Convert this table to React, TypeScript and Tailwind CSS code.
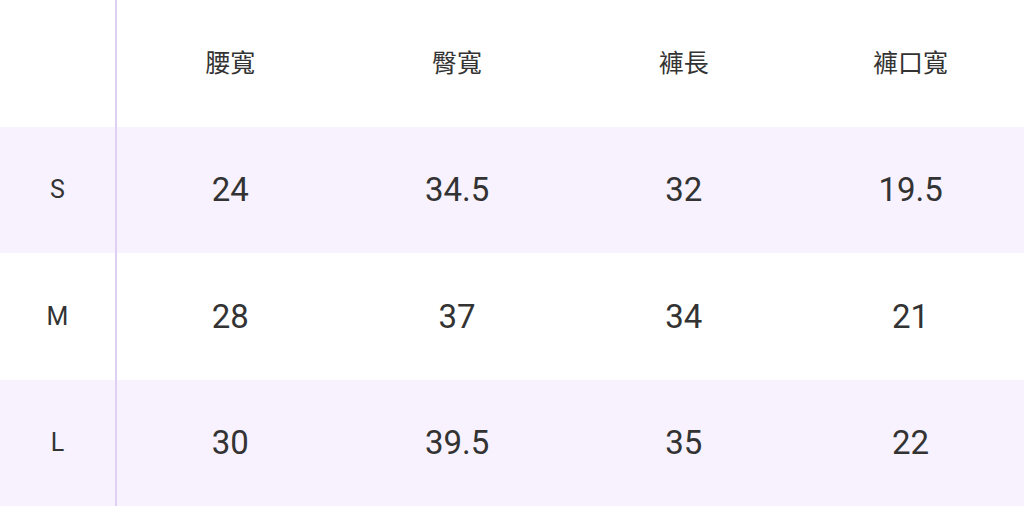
import React from "react";

type SizeRow = {
  size: string;
  values: string[];
};

const headers = ["腰寬", "臀寬", "褲長", "褲口寬"];

const rows: SizeRow[] = [
  { size: "S", values: ["24", "34.5", "32", "19.5"] },
  { size: "M", values: ["28", "37", "34", "21"] },
  { size: "L", values: ["30", "39.5", "35", "22"] },
];

const App = () => {
  return (
    <div
      className="w-[1024px] h-[506px] bg-white text-[#333333] flex flex-col"
      style={{ fontFamily: 'Roboto, "Noto Sans CJK TC", sans-serif' }}
    >
      <div className="flex h-[126.5px]">
        <div className="w-[117px] border-r-2 border-[#ddd0f3]" />
        {headers.map((title) => (
          <div key={title} className="flex-1 flex items-center justify-center text-[25px]">
            {title}
          </div>
        ))}
      </div>
      {rows.map((row, index) => (
        <div
          key={row.size}
          className={`flex h-[126.5px] ${index % 2 === 0 ? "bg-[#f7f2fd]" : "bg-white"}`}
        >
          <div className="w-[117px] border-r-2 border-[#ddd0f3] flex items-center justify-center text-[25px]">
            {row.size}
          </div>
          {row.values.map((value, i) => (
            <div key={i} className="flex-1 flex items-center justify-center text-[33px]">
              {value}
            </div>
          ))}
        </div>
      ))}
    </div>
  );
};

export default App;
